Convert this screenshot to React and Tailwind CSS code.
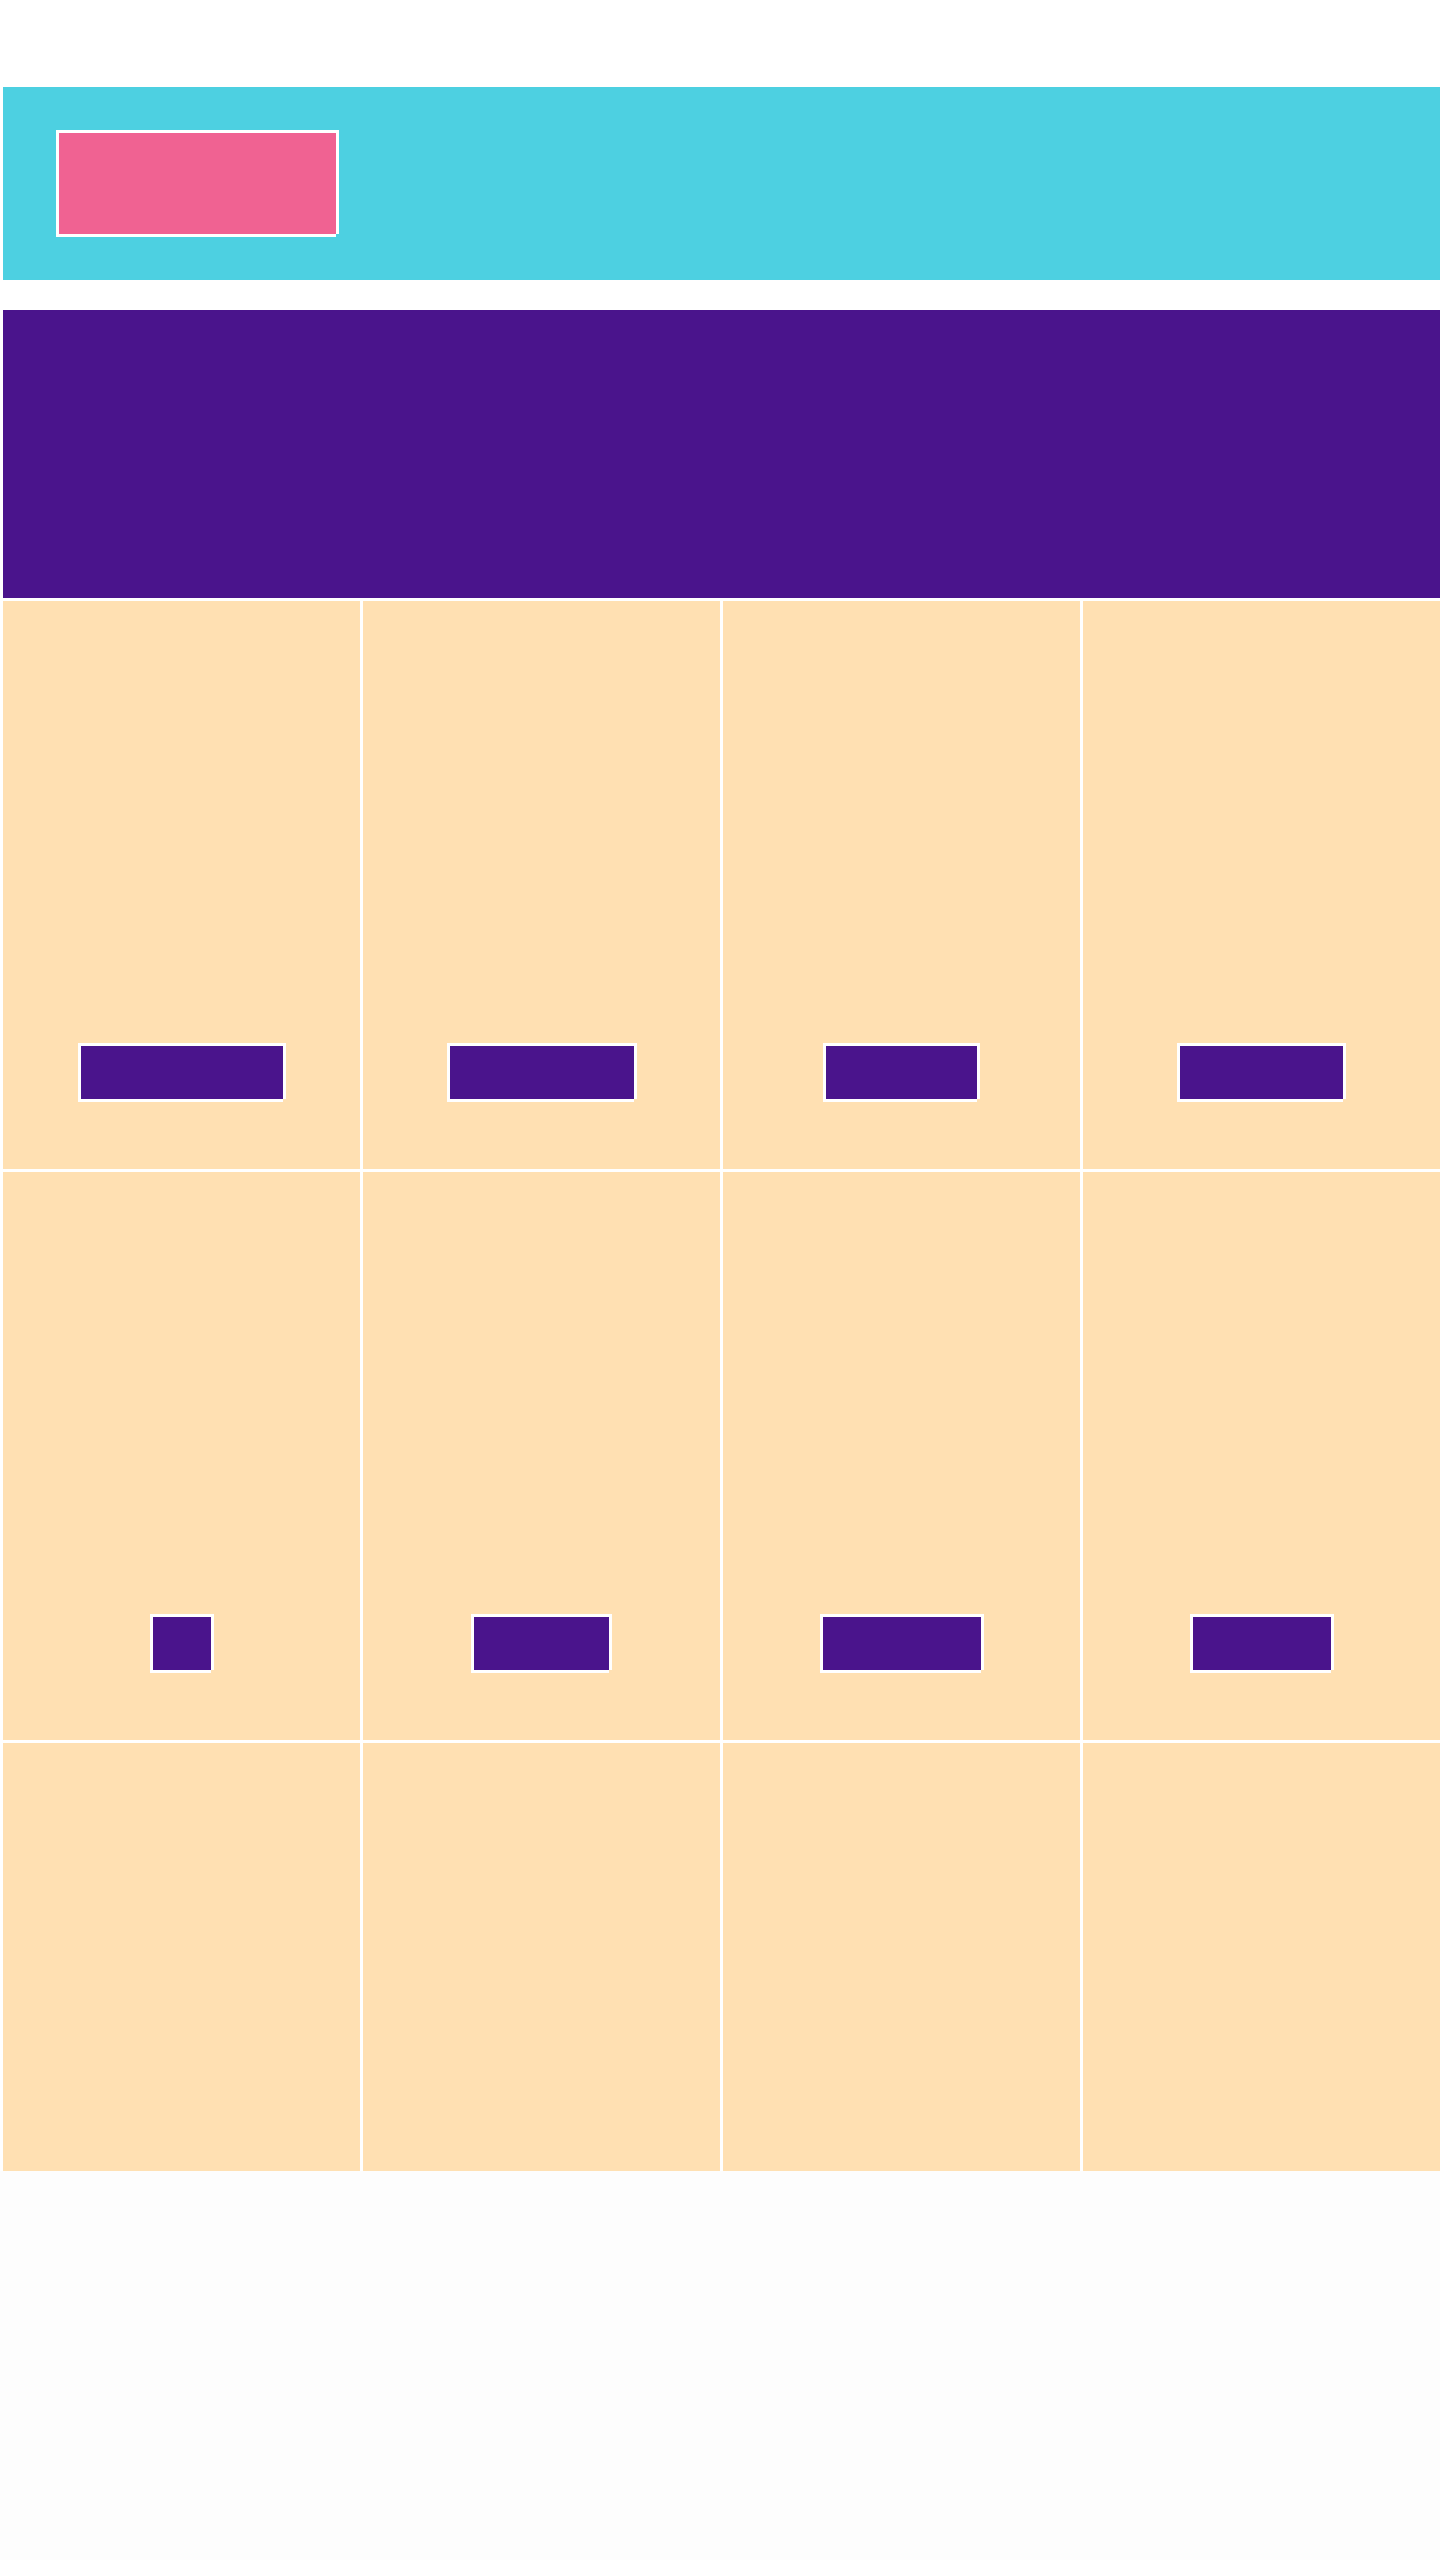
import React from 'react';

const rows = [
  [202, 184, 151, 163],
  [58, 135, 158, 138],
  [null, null, null, null],
];

// white frame drawn as stacked shadows (bottom-right corner stays open)
const frame =
  'shadow-[-3px_-3px_0_0_#ffffff,3px_-3px_0_0_#ffffff,-3px_3px_0_0_#ffffff,3px_0_0_0_#ffffff,0_3px_0_0_#ffffff]';

const Cell = ({ width }) => (
  <div className="bg-[#ffe0b2] flex flex-col items-center">
    <div className="h-[428px] w-full" />
    {width && (
      <div
        className={`mt-[17px] mb-[70px] h-[53px] bg-[#4a148c] ${frame}`}
        style={{ width }}
      />
    )}
  </div>
);

export default function App() {
  return (
    <div className="min-h-[2560px] bg-[#fdfdfd] font-['Liberation_Sans',sans-serif]">
      <div className="bg-white pt-[87px] pl-[3px] flex flex-col">
        <header className="h-[193px] bg-[#4dd0e1] pl-[56px] pt-[46px]">
          <div className={`w-[277px] h-[101px] bg-[#f06292] ${frame}`} />
        </header>

        <section className="mt-[30px] h-[288px] bg-[#4a148c]" />

        <div className="mt-[3px] grid grid-cols-4 gap-[3px]">
          {rows.map((row, r) =>
            row.map((w, c) => <Cell key={`${r}-${c}`} width={w} />)
          )}
        </div>
      </div>
    </div>
  );
}
